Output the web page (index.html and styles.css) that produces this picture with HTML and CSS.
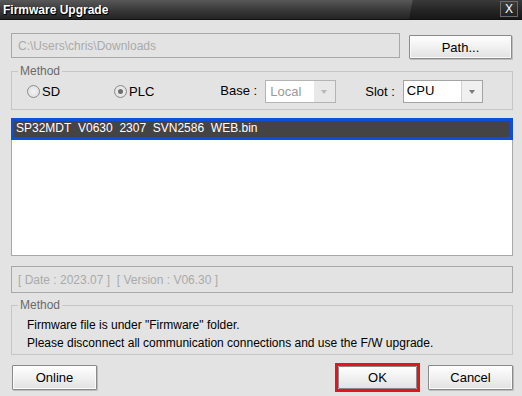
FILE: index.html
```html
<!DOCTYPE html>
<html lang="en">
<head>
    <meta charset="UTF-8">
    <title>Firmware Upgrade</title>
    <link rel="stylesheet" href="styles.css">
</head>
<body>
<div id="win">
    <div class="titlebar">
        <span class="title">Firmware Upgrade</span>
        <span class="close">X</span>
    </div>
    <div class="content">
        <div class="path-row">
            <div class="field path">C:\Users\chris\Downloads</div>
            <button class="btn path-btn">Path...</button>
        </div>

        <fieldset class="group method">
            <legend>Method</legend>
            <label class="radio"><span class="dot"></span>SD</label>
            <label class="radio plc"><span class="dot on"></span>PLC</label>
            <span class="lbl base-lbl">Base :</span>
            <div class="combo disabled"><span class="val">Local</span><span class="arrow"></span></div>
            <span class="lbl slot-lbl">Slot :</span>
            <div class="combo slot"><span class="val">CPU</span><span class="arrow"></span></div>
        </fieldset>

        <div class="list">
            <div class="row sel"><span>SP32MDT_V0630_2307_SVN2586_WEB.bin</span></div>
        </div>

        <div class="field info">[ Date : 2023.07 ]&nbsp; [ Version : V06.30 ]</div>

        <fieldset class="group note">
            <legend>Method</legend>
            <p>Firmware file is under "Firmware" folder.</p>
            <p>Please disconnect all communication connections and use the F/W upgrade.</p>
        </fieldset>

        <div class="buttons">
            <button class="btn">Online</button>
            <span class="spacer"></span>
            <span class="focus"><button class="btn">OK</button></span>
            <button class="btn">Cancel</button>
        </div>
    </div>
</div>
</body>
</html>
```

FILE: styles.css
```css
*{margin:0;padding:0;box-sizing:border-box;}
body{width:522px;height:396px;background:#e3e3e3;font-family:"Liberation Sans",Arial,sans-serif;font-size:12px;color:#000;overflow:hidden;}

.titlebar{height:20px;display:flex;align-items:center;justify-content:space-between;padding:0 4px 0 3px;border-bottom:1px solid #111;
    background:linear-gradient(101deg,rgba(0,0,0,0) 78.4%,rgba(0,0,0,.35) 78.6%),linear-gradient(#585858,#383838 55%,#242424);}
.title{color:#fff;font-weight:bold;font-size:12px;text-shadow:1px 1px 0 #000,0 1px 1px #000;}
.close{width:18px;height:16px;margin-top:-2px;border:1px solid #6a6a6a;background:linear-gradient(#3c3c3c,#222);color:#fff;font-size:12px;line-height:14px;text-align:center;}

.content{padding:13px 9px 0 11px;}

.field{border:1px solid #a8a8a8;color:#aaa;font-size:12px;padding-left:6px;display:flex;align-items:center;}
.path-row{display:flex;align-items:flex-start;}
.path{width:389px;height:25px;}
.path-btn{width:103px;height:24px;margin:2px 0 0 9px;}

.btn{font-family:"Liberation Sans",Arial,sans-serif;font-size:13px;color:#000;border:1px solid #8a8a8a;border-radius:1px;
    background:linear-gradient(#ffffff,#f2f2f2 45%,#e2e2e2);box-shadow:inset 0 0 0 1px #fbfbfb,1px 1px 0 #bdbdbd;}

.group{border:1px solid #c6c6c6;}
.group legend{color:#6a6a6a;font-size:12px;margin-left:-9px;padding:0 2px;line-height:12px;}

.method{margin-top:6px;height:45px;display:flex;align-items:center;padding:0 0 3px 15px;}
.radio{display:flex;align-items:center;font-size:13px;}
.radio.plc{margin-left:54px;}
.dot{width:13px;height:13px;border-radius:50%;border:1px solid #8c8c8c;background:radial-gradient(#f4f4f4,#dadada);margin-right:2px;display:flex;align-items:center;justify-content:center;}
.dot.on::after{content:"";width:5px;height:5px;border-radius:50%;background:#6e6e6e;}
.lbl{font-size:13px;}
.base-lbl{margin-left:66px;margin-top:-3px;}
.slot-lbl{margin-left:29px;}
.combo{height:23px;display:flex;border:1px solid #a4a4a4;background:#fff;margin-left:8px;}
.combo .val{flex:1;font-size:13px;padding:2px 0 0 3px;}
.combo .arrow{width:21px;border-left:1px solid #d2d2d2;background:#f0f0f0;position:relative;}
.combo .arrow::after{content:"";position:absolute;left:7px;top:9px;border-left:3px solid transparent;border-right:3px solid transparent;border-top:4px solid #7a7a7a;}
.combo.disabled{width:71px;border-color:#b4b4b4;}
.combo.disabled .val{color:#9a9a9a;margin:1px 0 1px 1px;}
.combo.disabled .arrow{background:#e8e8e8;border-left:0;}
.combo.disabled .arrow::after{border-top-color:#b8b8b8;}
.combo.slot{width:80px;}

.list{margin-top:8px;height:138px;border:1px solid #a8a8a8;background:#fff;}
.row.sel{margin:-1px -1px 0 -1px;height:22px;border:3px solid #0b4fdc;background:#444;color:#fff;font-size:12px;padding-left:2px;overflow:hidden;}
.row.sel span{display:block;height:13px;line-height:15px;overflow:hidden;}

.info{margin-top:10px;height:27px;font-size:12px;}

.note{margin-top:6px;height:56px;padding:5px 0 0 15px;}
.note p{font-size:12px;line-height:18px;}

.buttons{display:flex;align-items:center;margin-top:7px;height:30px;}
.buttons .btn{width:85px;height:25px;}
.spacer{flex:1;}
.focus{border:3px solid #e3141c;display:flex;margin-right:8px;}
.focus .btn{width:79px;height:23px;box-shadow:none;}
.buttons > .btn:first-child{margin-left:1px;}
```
